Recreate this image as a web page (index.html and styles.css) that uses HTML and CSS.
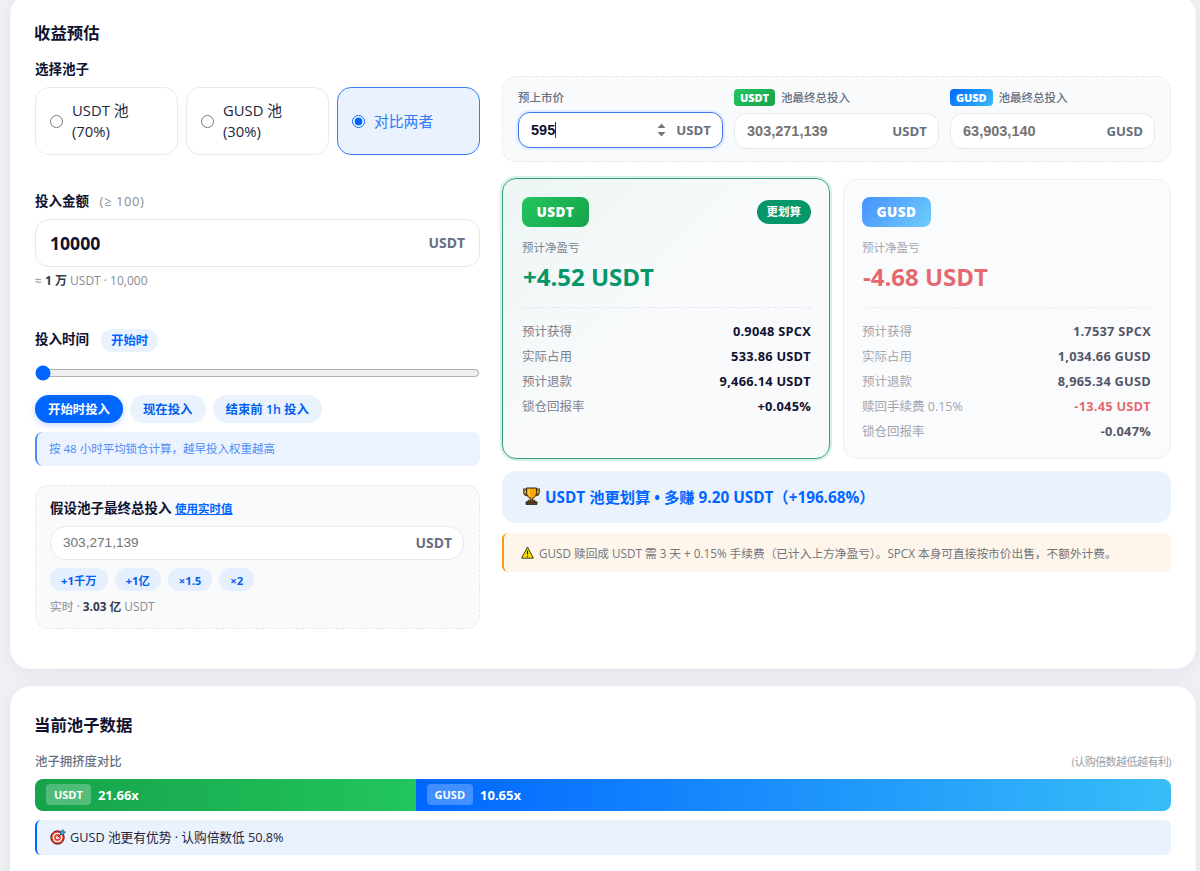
FILE: index.html
```
<!DOCTYPE html>
<html lang="zh-CN">
<head>
  <meta charset="UTF-8">
  <title>收益预估</title>
  <link rel="stylesheet" href="styles.css">
</head>
<body>

<section class="card estimate">
  <h2>收益预估</h2>
  <div class="layout">

    <div class="form">
      <div class="label">选择池子</div>
      <div class="options">
        <label class="option"><input type="radio" name="pool"><span>USDT 池<br>(70%)</span></label>
        <label class="option"><input type="radio" name="pool"><span>GUSD 池<br>(30%)</span></label>
        <label class="option active"><input type="radio" name="pool" checked><span>对比两者</span></label>
      </div>

      <div class="label label-amount">投入金额 <small>(≥ 100)</small></div>
      <div class="field field-big"><span class="num">10000</span><span class="unit">USDT</span></div>
      <div class="hint">≈ <b>1 万</b> USDT · 10,000</div>

      <div class="time-head">
        <div class="label">投入时间</div>
        <span class="tag">开始时</span>
      </div>
      <input class="slider" type="range" min="0" max="48" value="0">
      <div class="pills">
        <button class="pill on">开始时投入</button>
        <button class="pill">现在投入</button>
        <button class="pill">结束前 1h 投入</button>
      </div>
      <div class="note">按 48 小时平均锁仓计算，越早投入权重越高</div>

      <div class="assume">
        <div class="label">假设池子最终总投入 <a href="#">使用实时值</a></div>
        <div class="field field-mid"><span class="num">303,271,139</span><span class="unit">USDT</span></div>
        <div class="chips">
          <button>+1千万</button>
          <button>+1亿</button>
          <button>×1.5</button>
          <button>×2</button>
        </div>
        <div class="hint">实时 · <b>3.03 亿</b> USDT</div>
      </div>
    </div>

    <div class="result">
      <div class="params">
        <div class="param">
          <div class="param-label">预上市价</div>
          <div class="field focus">
            <span class="num">595<i class="caret"></i></span>
            <svg class="spin" width="9" height="14" viewBox="0 0 9 14"><path d="M0.5 5 4.5 0.5 8.5 5zM0.5 9h8L4.5 13.5z" fill="#777"/></svg>
            <span class="unit">USDT</span>
          </div>
        </div>
        <div class="param">
          <div class="param-label"><span class="coin usdt">USDT</span>池最终总投入</div>
          <div class="field"><span class="num">303,271,139</span><span class="unit">USDT</span></div>
        </div>
        <div class="param">
          <div class="param-label"><span class="coin gusd">GUSD</span>池最终总投入</div>
          <div class="field"><span class="num">63,903,140</span><span class="unit">GUSD</span></div>
        </div>
      </div>

      <div class="compare">
        <div class="pool best">
          <div class="pool-head"><span class="coin-lg usdt">USDT</span><span class="best-tag">更划算</span></div>
          <div class="profit-label">预计净盈亏</div>
          <div class="profit up">+4.52 USDT</div>
          <div class="rows">
            <div class="row"><span>预计获得</span><b>0.9048 SPCX</b></div>
            <div class="row"><span>实际占用</span><b>533.86 USDT</b></div>
            <div class="row"><span>预计退款</span><b>9,466.14 USDT</b></div>
            <div class="row"><span>锁仓回报率</span><b>+0.045%</b></div>
          </div>
        </div>
        <div class="pool dim">
          <div class="pool-head"><span class="coin-lg gusd">GUSD</span></div>
          <div class="profit-label">预计净盈亏</div>
          <div class="profit down">-4.68 USDT</div>
          <div class="rows">
            <div class="row"><span>预计获得</span><b>1.7537 SPCX</b></div>
            <div class="row"><span>实际占用</span><b>1,034.66 GUSD</b></div>
            <div class="row"><span>预计退款</span><b>8,965.34 GUSD</b></div>
            <div class="row"><span>赎回手续费 0.15%</span><b class="down">-13.45 USDT</b></div>
            <div class="row"><span>锁仓回报率</span><b>-0.047%</b></div>
          </div>
        </div>
      </div>

      <div class="winner">
        <svg width="17" height="18" viewBox="0 0 17 18">
          <path d="M4 2.5H1.2v2.2c0 2.3 1.4 3.6 3.8 3.8M13 2.5h2.8v2.2c0 2.3-1.4 3.6-3.8 3.8" fill="none" stroke="#2b2111" stroke-width="2"/>
          <path d="M4 2.5H1.4v2.2c0 2.1 1.2 3.3 3.4 3.6M13 2.5h2.6v2.2c0 2.1-1.2 3.3-3.4 3.6" fill="none" stroke="#f0a30a" stroke-width=".8"/>
          <path d="M3.5 1h10v4.5c0 3-1.5 4.7-3.7 5.5v2.3H7.2V11C5 10.2 3.5 8.5 3.5 5.5z" fill="#f5a80c" stroke="#2b2111"/>
          <path d="M6 2.2v4c0 1.3.4 2.2 1 2.8" fill="none" stroke="#ffe08a"/>
          <path d="M5 13.3h7v1.5H5z" fill="#f5a80c" stroke="#2b2111" stroke-width=".8"/>
          <path d="M3 14.8h11v2.7H3z" fill="#5b3a22" stroke="#2b2111" stroke-width=".8"/>
        </svg>
        <span>USDT 池更划算 • 多赚 9.20 USDT（+196.68%）</span>
      </div>

      <div class="warning">
        <svg width="13" height="13" viewBox="0 0 13 13">
          <path d="M6.5 1 12.3 12.2H.7z" fill="#ffe000" stroke="#3a3a1c" stroke-linejoin="round"/>
          <path d="M6.5 4.5v4M6.5 9.7v1.3" stroke="#222" stroke-width="1.2"/>
        </svg>
        <span>GUSD 赎回成 USDT 需 3 天 + 0.15% 手续费（已计入上方净盈亏）。SPCX 本身可直接按市价出售，不额外计费。</span>
      </div>
    </div>

  </div>
</section>

<section class="card pools">
  <h2>当前池子数据</h2>
  <div class="crowd-head"><span>池子拥挤度对比</span><small>(认购倍数越低越有利)</small></div>
  <div class="crowd-bar">
    <div class="seg seg-usdt" style="width:33.5%"><span class="seg-coin">USDT</span>21.66x</div>
    <div class="seg seg-gusd" style="width:66.5%"><span class="seg-coin">GUSD</span>10.65x</div>
  </div>
  <div class="advantage">
    <svg width="16" height="16" viewBox="0 0 16 16">
      <circle cx="7.5" cy="8.5" r="6.7" fill="#e8432e" stroke="#5a2018"/>
      <circle cx="7.5" cy="8.5" r="4.8" fill="#fff"/>
      <circle cx="7.5" cy="8.5" r="3.4" fill="#e8432e"/>
      <circle cx="7.5" cy="8.5" r="1.6" fill="#fff"/>
      <path d="M7.5 8.5 12 4" stroke="#222"/>
      <path d="M10.5 5.5V3L13 .6l.5 2 2 .5L13 5.5z" fill="#32a9e0" stroke="#1c4a66" stroke-width=".7"/>
    </svg>
    <span>GUSD 池更有优势 · 认购倍数低 50.8%</span>
  </div>
</section>

</body>
</html>
```
FILE: styles.css
```
* {
  box-sizing: border-box;
}

body {
  margin: 0;
  padding: 0 4px 0 10px;
  height: 871px;
  overflow: hidden;
  font-family: "Open Sans", "Noto Sans CJK SC", sans-serif;
  font-size: 13px;
  color: #0f1230;
  background-color: #f0f1f5;
}

button {
  font-family: inherit;
  border: none;
  padding: 0;
  white-space: nowrap;
}

.card {
  background-color: #fff;
  border: 1px solid #fafafb;
  border-radius: 20px;
  padding: 24px;
  box-shadow: 0 4px 20px rgba(15, 18, 48, 0.06);
}

.estimate {
  height: 675px;
  margin-top: -6px;
}

.pools {
  height: 240px;
  margin-top: 17px;
}

h2 {
  margin: 0 0 0 -1px;
  height: 28px;
  line-height: 28px;
  font-size: 16.4px;
  font-weight: 700;
}

.layout {
  display: grid;
  grid-template-columns: 445px 669px;
  gap: 22px;
  margin-top: 12px;
}

.label {
  height: 20px;
  line-height: 20px;
  font-size: 13.5px;
  font-weight: 600;
}

.label small {
  margin-left: 7px;
  font-size: 13px;
  font-weight: 400;
  letter-spacing: 0.6px;
  color: #868b95;
}

.label a {
  font-size: 11.5px;
  color: #0066ff;
}

/* pool choice */
.options {
  display: grid;
  grid-template-columns: repeat(3, 1fr);
  gap: 8px;
  margin-top: 8px;
}

.option {
  display: flex;
  align-items: center;
  gap: 9px;
  height: 68px;
  padding: 0 14px;
  border: 1px solid #e9eaef;
  border-radius: 14px;
  font-size: 14.8px;
  line-height: 21px;
  color: #22263f;
}

.option input {
  margin: 0;
  width: 13px;
  height: 13px;
  flex: none;
  accent-color: #0066ff;
}

.option.active {
  border-color: #3b7bf0;
  background-color: #eaf2fd;
  color: #2f7af5;
}

.label-amount {
  margin-top: 36px;
}

/* inputs */
.field {
  display: flex;
  align-items: center;
  height: 36px;
  padding: 0 11px 1px 12px;
  border: 1px solid #e6e8ed;
  border-radius: 12px;
  background-color: #fff;
  font-size: 14.5px;
}

.field .num {
  flex: 1;
  font-family: "Liberation Sans", Arial, sans-serif;
  font-weight: 700;
  color: #737373;
}

.field .unit {
  font-size: 13.2px;
  font-weight: 700;
  color: #667080;
}

.field.focus {
  margin-top: -1px;
  border-color: #3f76e6;
  box-shadow: 0 0 0 2px #e0ecff;
}

.field.focus .num {
  color: #0f1230;
}

.caret {
  display: inline-block;
  width: 1px;
  height: 16px;
  vertical-align: -3px;
  background-color: #333;
}

.spin {
  margin-right: 10px;
}

.field-big {
  height: 48px;
  margin-top: 8px;
  padding: 0 14px 1px;
  border-radius: 14px;
}

.field-big .num {
  font-family: inherit;
  font-size: 17.6px;
  color: #0f1230;
}

.field-big .unit,
.field-mid .unit {
  font-size: 13.9px;
}

.field-mid {
  height: 34px;
  margin-top: 8px;
  border-radius: 16px;
}

.field-mid .num {
  font-size: 13.6px;
  font-weight: 400;
}

.hint {
  height: 20px;
  margin-top: 4px;
  line-height: 20px;
  font-size: 12px;
  color: #868b95;
}

.hint b {
  font-weight: 700;
  color: #333a4a;
}

/* time */
.time-head {
  display: flex;
  gap: 12px;
  height: 23px;
  margin-top: 38px;
}

.tag {
  padding: 0 10px;
  border-radius: 12px;
  background-color: #eaf2fd;
  font-size: 12.4px;
  font-weight: 600;
  line-height: 24px;
  color: #0066ff;
}

.slider {
  display: block;
  width: 100%;
  height: 16px;
  margin: 13px 0 14px;
  accent-color: #0066ff;
}

.pills {
  display: flex;
  gap: 7px;
}

.pill {
  height: 28px;
  padding: 1px 13px 0;
  border-radius: 14px;
  background-color: #eaf2fd;
  font-size: 12.4px;
  font-weight: 600;
  line-height: 28px;
  color: #0060ee;
}

.pill.on {
  background-color: #0066ff;
  color: #fff;
  box-shadow: 0 2px 6px rgba(0, 102, 255, 0.25);
}

.note {
  height: 34px;
  margin-top: 9px;
  padding-left: 12px;
  border-left: 2px solid #4b8cf7;
  border-radius: 8px;
  background-color: #edf3fe;
  font-size: 11.5px;
  line-height: 33px;
  color: #4b8cf7;
}

.assume {
  height: 144px;
  margin-top: 19px;
  padding: 12px 15px 0 14px;
  border: 1px dashed #e3e7ee;
  border-radius: 14px;
  background-color: #f9fafc;
}

.assume .hint {
  margin-top: 5px;
  font-size: 11.8px;
}

.chips {
  display: flex;
  gap: 7px;
  margin-top: 8px;
}

.chips button {
  height: 23px;
  padding: 1px 11px 0;
  border-radius: 12px;
  background-color: #e6effd;
  font-size: 11.3px;
  font-weight: 700;
  line-height: 23px;
  color: #0060ee;
}

/* right column */
.params {
  display: grid;
  grid-template-columns: repeat(3, 1fr);
  gap: 11px;
  height: 86px;
  margin-top: 17px;
  padding: 10px 15px 0;
  border: 1px dashed #e6e9ef;
  border-radius: 14px;
  background-color: #f9fafc;
}

.param-label {
  display: flex;
  align-items: center;
  height: 20px;
  margin-bottom: 6px;
  font-size: 11.5px;
  font-weight: 500;
  color: #667080;
}

.coin {
  min-width: 41px;
  height: 17px;
  margin-right: 6px;
  padding: 0 6px;
  border-radius: 4px;
  font-size: 11px;
  font-weight: 800;
  line-height: 17px;
  letter-spacing: -0.1px;
  text-align: center;
  color: #fff;
}

.usdt {
  background: linear-gradient(135deg, #22c55e, #16a34a);
}

.gusd {
  background: linear-gradient(135deg, #0066ff, #38bdf8);
}

.compare {
  display: grid;
  grid-template-columns: 1fr 1fr;
  gap: 13px;
  margin-top: 17px;
}

.pool {
  height: 280px;
  padding: 16px 19px 0 18px;
  border: 1px solid #e3e7ee;
  border-radius: 14px;
  background-color: #f9fafc;
}

.pool.best {
  height: 281px;
  margin: -1px 0 0;
  padding: 17px 18px 0 19px;
  border-color: #38a07c;
  background: linear-gradient(135deg, #ecf6f4, #f9fafc 50%);
  box-shadow: 0 0 0 2px #d7f0e6;
}

.pool.dim {
  opacity: 0.72;
}

.pool-head {
  display: flex;
  align-items: center;
  justify-content: space-between;
  height: 31px;
}

.coin-lg {
  padding: 0 14.5px;
  border-radius: 8px;
  font-size: 13.6px;
  font-weight: 800;
  letter-spacing: 0.4px;
  line-height: 30px;
  color: #fff;
}

.best-tag {
  padding: 0 10px;
  border-radius: 12px;
  background-color: #059669;
  font-size: 11.5px;
  font-weight: 700;
  line-height: 24px;
  color: #fff;
}

.profit-label {
  height: 20px;
  margin-top: 10px;
  font-size: 11.5px;
  line-height: 21px;
  color: #7b828f;
}

.profit {
  height: 30px;
  margin-top: 5px;
  padding-left: 1px;
  font-size: 24px;
  font-weight: 700;
  line-height: 30px;
}

.up {
  color: #059669;
}

.pool .down {
  color: #dc2f38;
}

.rows {
  margin-top: 15px;
  padding-top: 11px;
  border-top: 1px dashed #e3e7ee;
}

.row {
  display: flex;
  justify-content: space-between;
  height: 25px;
  font-size: 12.5px;
  line-height: 25px;
}

.row span {
  color: #7b828f;
}

.row b {
  font-size: 12.8px;
  font-weight: 700;
  letter-spacing: 0.25px;
}

.winner {
  display: flex;
  align-items: center;
  gap: 5px;
  height: 52px;
  margin-top: 12px;
  padding: 0 0 2px 21px;
  border-radius: 14px;
  background-color: #eaf2fd;
  font-size: 15.3px;
  font-weight: 700;
  color: #0066ff;
}

.warning {
  display: flex;
  align-items: center;
  gap: 5px;
  height: 39px;
  margin-top: 10px;
  padding-left: 17px;
  border-left: 2px solid #f59e0b;
  border-radius: 6px;
  background-color: #fef6ea;
  font-size: 11.7px;
  white-space: nowrap;
  color: #71757d;
}

/* pool data */
.crowd-head {
  display: flex;
  justify-content: space-between;
  height: 20px;
  margin-top: 12px;
  font-size: 12.4px;
  font-weight: 500;
  line-height: 21px;
  color: #667080;
}

.crowd-head small {
  font-size: 11px;
  font-weight: 400;
  letter-spacing: -0.55px;
  color: #9aa0aa;
}

.crowd-bar {
  display: flex;
  height: 32px;
  margin-top: 8px;
  border-radius: 8px;
  overflow: hidden;
}

.seg {
  display: flex;
  align-items: center;
  gap: 7px;
  padding: 0 0 1px 11px;
  font-weight: 700;
  color: #fff;
}

.seg-usdt {
  background: linear-gradient(90deg, #16a34a, #22c55e);
}

.seg-gusd {
  background: linear-gradient(90deg, #0066ff, #38bdf8);
}

.seg-coin {
  padding: 0 8px;
  border-radius: 4px;
  background-color: rgba(255, 255, 255, 0.25);
  font-size: 11px;
  line-height: 21px;
}

.advantage {
  display: flex;
  align-items: center;
  gap: 4px;
  height: 35px;
  margin-top: 9px;
  padding: 0 0 2px 13px;
  border-left: 2px solid #0066ff;
  border-radius: 6px;
  background-color: #eaf2fd;
  font-size: 12.7px;
  color: #22263f;
}
```
